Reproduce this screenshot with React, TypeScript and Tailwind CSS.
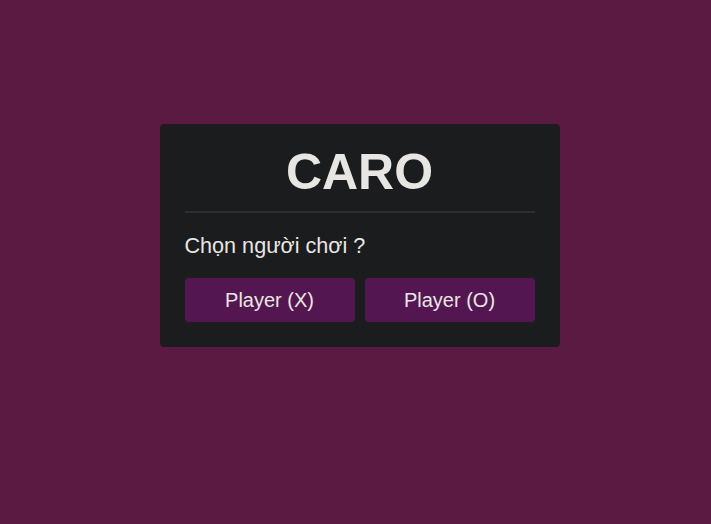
import React from 'react';

export default function App() {
  return (
    <div className="min-h-screen w-full bg-[#5b1a42] flex justify-center pt-[124px] pl-[8px] font-['Liberation_Sans',Arial,sans-serif] text-[#e8e6e3]">
      <div className="w-[400px] h-[223px] bg-[#1b1c1e] rounded-[4px] px-[25px] pt-[20px] pb-[25px] flex flex-col">
        {/* Header */}
        <div className="border-b-2 border-[#2c2e30] pb-[10px] text-center">
          <h1 className="text-[50px] leading-[57px] font-bold">CARO</h1>
        </div>

        <p className="text-[21.6px] leading-[25px] mt-[20px]">Chọn người chơi ?</p>

        <div className="grid grid-cols-2 gap-[10px] mt-[20px]">
          <button className="h-[44px] rounded-[4px] bg-[#541650] text-[20px] text-[#e8e6e3]">
            Player (X)
          </button>
          <button className="h-[44px] rounded-[4px] bg-[#541650] text-[20px] text-[#e8e6e3]">
            Player (O)
          </button>
        </div>
      </div>
    </div>
  );
}
